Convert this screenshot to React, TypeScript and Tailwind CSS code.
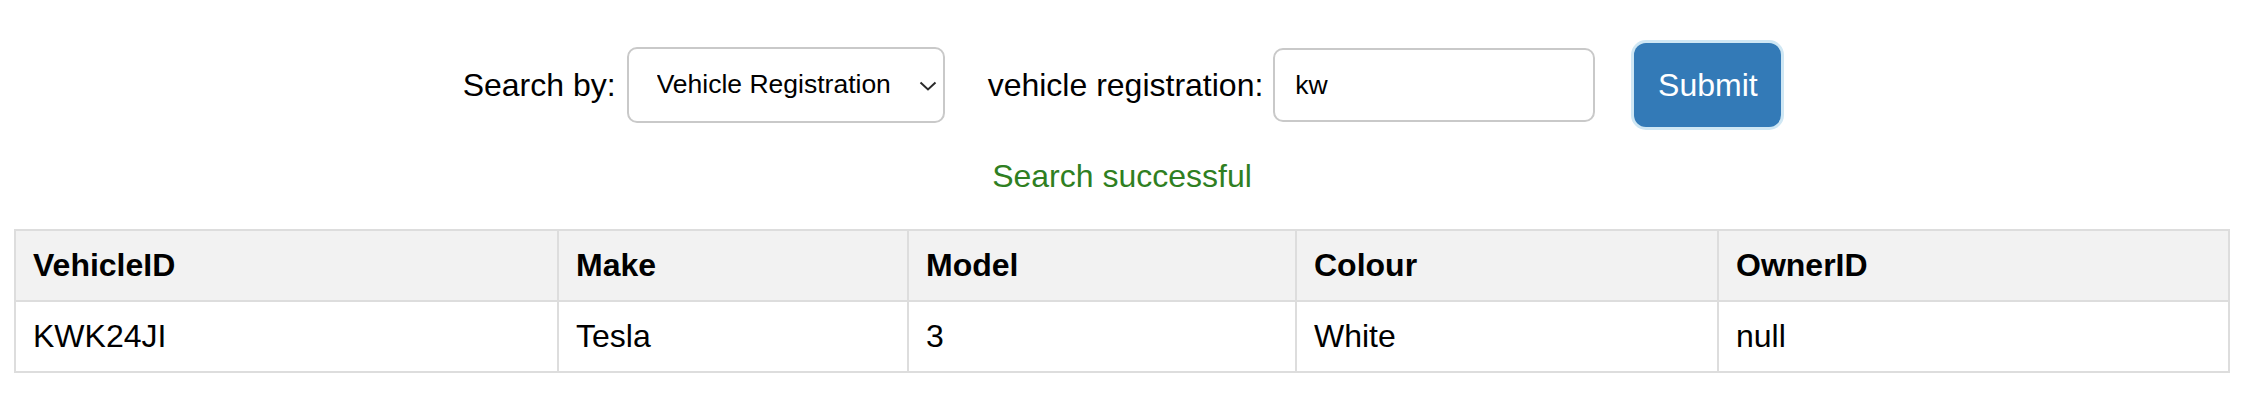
import { useState } from "react";

const columns = [
  { key: "VehicleID", width: "w-[543px]" },
  { key: "Make", width: "w-[350px]" },
  { key: "Model", width: "w-[388px]" },
  { key: "Colour", width: "w-[422px]" },
  { key: "OwnerID", width: "w-[511px]" },
];

const rows = [{ VehicleID: "KWK24JI", Make: "Tesla", Model: "3", Colour: "White", OwnerID: "null" }];

export default function App() {
  const [searchBy, setSearchBy] = useState("Vehicle Registration");
  const [query, setQuery] = useState("kw");

  return (
    <div
      className="min-h-[404px] bg-white text-black pt-[43px]"
      style={{ fontFamily: '"Liberation Sans", Arial, sans-serif' }}
    >
      {/* Search form */}
      <div className="flex items-center justify-center h-[84px]">
        <label className="text-[32px] leading-[37px] mr-[11px]">Search by:</label>
        <div className="relative">
          <select
            value={searchBy}
            onChange={(e) => setSearchBy(e.target.value)}
            className="appearance-none w-[318px] h-[76px] border-2 border-[#c9c9c9] rounded-[10px] bg-white pl-[28px] text-[26.5px] text-black outline-none"
          >
            <option>Vehicle Registration</option>
            <option>Owner ID</option>
          </select>
          <svg
            className="absolute right-[8px] top-[34px] pointer-events-none"
            width="18"
            height="10"
            viewBox="0 0 18 10"
            fill="none"
          >
            <path d="M1.5 1.5 L9 8.5 L16.5 1.5" stroke="#2a2a2a" strokeWidth="2" />
          </svg>
        </div>
        <label className="text-[32px] leading-[37px] ml-[43px] mr-[10px]">vehicle registration:</label>
        <input
          value={query}
          onChange={(e) => setQuery(e.target.value)}
          className="w-[322px] h-[74px] border-2 border-[#c9c9c9] rounded-[10px] px-[20px] text-[26.5px] text-black outline-none"
        />
        <button className="ml-[39px] w-[147px] h-[84px] rounded-[12px] bg-[#337ab7] text-white text-[32px] shadow-[0_0_0_3px_#cfe7f4]">
          Submit
        </button>
      </div>

      <p className="mt-[31px] text-center text-[32px] leading-[37px] text-[#2f7f22]">Search successful</p>

      {/* Results */}
      <div className="mt-[34px] pl-[14px] pr-[16px]">
        <table className="w-[2214px] table-fixed border-collapse text-[32px] leading-[37px]">
          <colgroup>
            {columns.map((c) => (
              <col key={c.key} className={c.width} />
            ))}
          </colgroup>
          <thead>
            <tr className="bg-[#f2f2f2]">
              {columns.map((c) => (
                <th key={c.key} className="border-2 border-[#dddddd] px-[17px] py-4 text-left font-bold">
                  {c.key}
                </th>
              ))}
            </tr>
          </thead>
          <tbody>
            {rows.map((r) => (
              <tr key={r.VehicleID}>
                {columns.map((c) => (
                  <td key={c.key} className="border-2 border-[#dddddd] px-[17px] py-4 text-left">
                    {r[c.key as keyof typeof r]}
                  </td>
                ))}
              </tr>
            ))}
          </tbody>
        </table>
      </div>
    </div>
  );
}
